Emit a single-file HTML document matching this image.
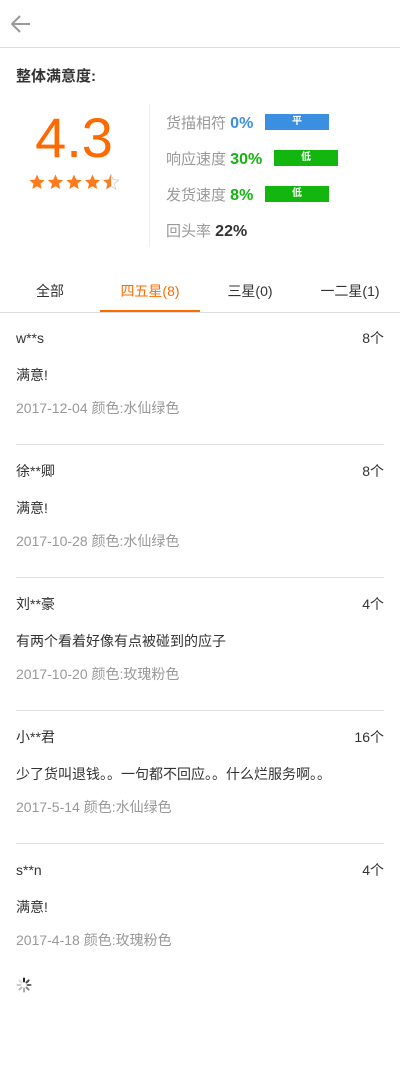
<!DOCTYPE html>
<html><head><meta charset="utf-8"><style>
*{margin:0;padding:0;box-sizing:border-box}
body{width:400px;height:1066px;background:#fff;font-family:"Liberation Sans","Noto Sans CJK SC",sans-serif;position:relative;overflow:hidden;color:#333}
.a{position:absolute}
.lbl{color:#999;font-size:15px}
.lbl span{font-size:16px;font-weight:bold}
.badge{position:absolute;height:16px;color:#fff;font-size:10px;font-weight:bold;text-align:center;line-height:16px}
.tab{position:absolute;top:281px;width:100px;text-align:center;font-size:14px;color:#333;line-height:20px}
.rv{position:absolute;left:16px;width:368px;font-size:14px}
.name{position:absolute;top:0;left:0;line-height:20px}
.cnt{position:absolute;top:0;right:0;line-height:20px}
.txt{position:absolute;top:37px;left:0;line-height:20px}
.date{position:absolute;top:70px;left:0;color:#999;line-height:20px}
.ln{position:absolute;top:116px;left:0;width:368px;height:1px;background:#ddd}
</style></head><body>
<svg class="a" style="left:10px;top:14px" width="22" height="20" viewBox="0 0 22 20"><path d="M20 10H3M10 2L2 10L10 18" fill="none" stroke="#999" stroke-width="2"/></svg>
<div class="a" style="top:47px;left:0;width:400px;height:1px;background:#ddd"></div>
<div class="a" style="left:16px;top:65px;font-size:15px;font-weight:bold;color:#333">整体满意度:</div>
<div class="a" style="left:0;width:148px;top:106px;text-align:center;font-size:56px;color:#ff6a00;line-height:64px">4.3</div>
<svg class="a" style="left:29px;top:174px" width="94" height="18" viewBox="0 0 94 18">
<defs><path id="s" d="M8 0.5L10.2 5.6L15.6 6.1L11.5 9.7L12.7 15L8 12.2L3.3 15L4.5 9.7L0.4 6.1L5.8 5.6Z"/><clipPath id="h"><rect x="0" y="0" width="8" height="18"/></clipPath></defs>
<g fill="#ff7a1a"><use href="#s" x="0"/><use href="#s" x="18.5"/><use href="#s" x="37"/><use href="#s" x="55.5"/></g>
<use href="#s" x="74" fill="none" stroke="#ccc" stroke-width="0.8"/>
<g transform="translate(74 0)"><use href="#s" fill="#ff7a1a" clip-path="url(#h)"/></g>
</svg>
<div class="a" style="left:149px;top:104px;width:1px;height:143px;background:#eee"></div>
<div class="a lbl" style="left:166px;top:112px">货描相符 <span style="color:#3b8fe0">0%</span></div>
<div class="badge" style="left:265px;top:114px;width:64px;background:#3b8fe0">平</div>
<div class="a lbl" style="left:166px;top:148px">响应速度 <span style="color:#13b50f">30%</span></div>
<div class="badge" style="left:274px;top:150px;width:64px;background:#13b50f">低</div>
<div class="a lbl" style="left:166px;top:184px">发货速度 <span style="color:#13b50f">8%</span></div>
<div class="badge" style="left:265px;top:186px;width:64px;background:#13b50f">低</div>
<div class="a lbl" style="left:166px;top:220px">回头率 <span style="color:#333">22%</span></div>
<div class="tab" style="left:0">全部</div>
<div class="tab" style="left:100px;color:#ff6a00">四五星(8)</div>
<div class="tab" style="left:200px">三星(0)</div>
<div class="tab" style="left:300px">一二星(1)</div>
<div class="a" style="top:312px;left:0;width:400px;height:1px;background:#ddd"></div>
<div class="a" style="top:310px;left:100px;width:100px;height:2px;background:#ff6a00"></div>
<div class="rv" style="top:328px"><div class="name">w**s</div><div class="cnt">8个</div><div class="txt">满意!</div><div class="date">2017-12-04 颜色:水仙绿色</div><div class="ln"></div></div>
<div class="rv" style="top:461px"><div class="name">徐**卿</div><div class="cnt">8个</div><div class="txt">满意!</div><div class="date">2017-10-28 颜色:水仙绿色</div><div class="ln"></div></div>
<div class="rv" style="top:594px"><div class="name">刘**豪</div><div class="cnt">4个</div><div class="txt">有两个看着好像有点被碰到的应子</div><div class="date">2017-10-20 颜色:玫瑰粉色</div><div class="ln"></div></div>
<div class="rv" style="top:727px"><div class="name">小**君</div><div class="cnt">16个</div><div class="txt">少了货叫退钱。。一句都不回应。。什么烂服务啊。。</div><div class="date">2017-5-14 颜色:水仙绿色</div><div class="ln"></div></div>
<div class="rv" style="top:860px"><div class="name">s**n</div><div class="cnt">4个</div><div class="txt">满意!</div><div class="date">2017-4-18 颜色:玫瑰粉色</div></div>
<svg class="a" style="left:16px;top:977px" width="16" height="16" viewBox="0 0 16 16"><g stroke-width="2" stroke-linecap="round">
<line x1="8" y1="1.5" x2="8" y2="4.5" stroke="#222"/><line x1="12.6" y1="3.4" x2="10.5" y2="5.5" stroke="#444"/><line x1="14.5" y1="8" x2="11.5" y2="8" stroke="#666"/><line x1="12.6" y1="12.6" x2="10.5" y2="10.5" stroke="#888"/><line x1="8" y1="14.5" x2="8" y2="11.5" stroke="#aaa"/><line x1="3.4" y1="12.6" x2="5.5" y2="10.5" stroke="#bbb"/><line x1="1.5" y1="8" x2="4.5" y2="8" stroke="#ccc"/><line x1="3.4" y1="3.4" x2="5.5" y2="5.5" stroke="#ddd"/></g></svg>
</body></html>
